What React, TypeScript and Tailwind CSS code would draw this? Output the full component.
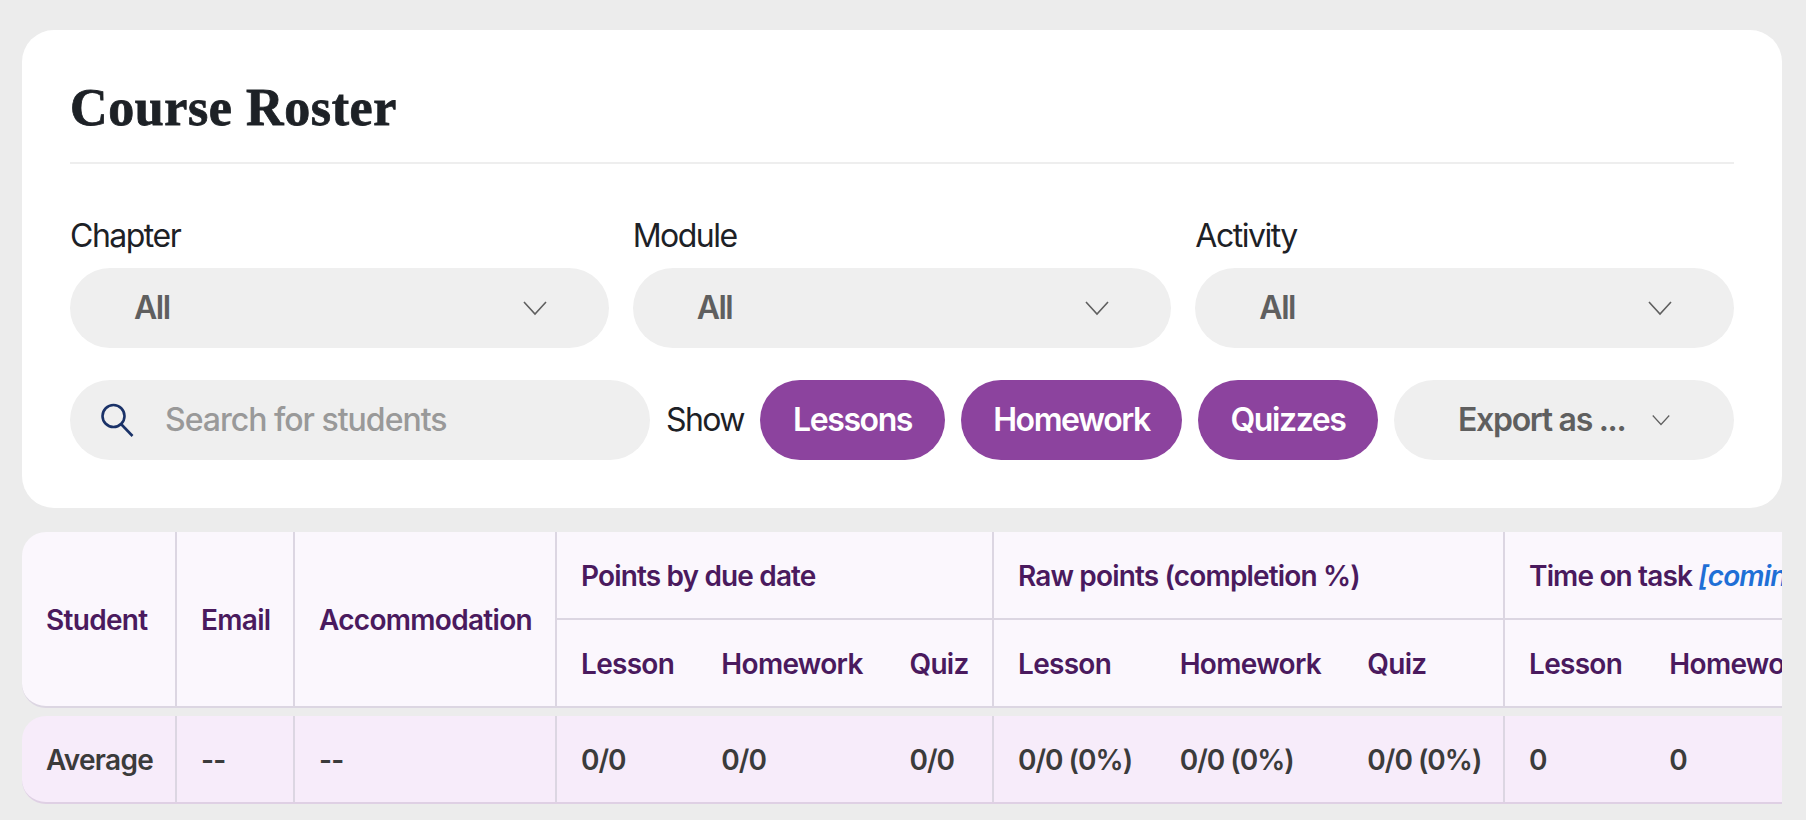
import React from "react";

const Chevron = ({ size = 24 }: { size?: number }) => (
  <svg width={size} height={size} viewBox="0 0 24 24" fill="none" stroke="#5f5f5f" strokeWidth="1.6" className="shrink-0">
    <path d="M1 6l11 12L23 6" />
  </svg>
);

const Select = ({ label }: { label: string }) => (
  <div className="flex flex-col flex-1 min-w-0">
    <div className="text-[32px] leading-[36px] text-[#1d2126] mb-[14px] tracking-[-1.5px]">{label}</div>
    <div className="h-[80px] rounded-[40px] bg-[#efefef] flex items-center justify-between pl-[64px] pr-[62px]">
      <span className="text-[32px] font-semibold text-[#5f5f5f] tracking-[-1.5px]">All</span>
      <Chevron />
    </div>
  </div>
);

const Pill = ({ children, className }: { children: React.ReactNode; className: string }) => (
  <div className={"h-[80px] rounded-[40px] bg-[#8c439e] text-white text-[32px] font-semibold tracking-[-1.4px] flex items-center justify-center " + className}>
    {children}
  </div>
);

const th = "text-[28px] font-semibold text-[#4a1a5e] tracking-[-0.7px] whitespace-nowrap pt-[2px]";
const thTitle = "text-[28px] font-semibold text-[#4a1a5e] tracking-[-0.85px] whitespace-nowrap pt-[2px]";
const td = "text-[28px] font-semibold text-[#3b3b3b] tracking-[-0.7px] whitespace-nowrap pt-[2px]";
const tdVal = "text-[28px] font-semibold text-[#3b3b3b] tracking-[-1px] whitespace-nowrap pt-[2px]";
const line = "border-r-[2px] border-[#dcd6e2]";

const subCols = ["Lesson", "Homework", "Quiz"];

const Group = ({ title, widths, width }: { title: React.ReactNode; widths: string[]; width: string }) => (
  <div className={"shrink-0 flex flex-col " + width + " " + line}>
    <div className={"h-[88px] flex items-center pl-[24px] border-b-[2px] border-[#dcd6e2] " + thTitle}>{title}</div>
    <div className="flex-1 flex items-center">
      {subCols.map((label, i) => (
        <div key={label} className={"pl-[24px] " + widths[i] + " " + th}>{label}</div>
      ))}
    </div>
  </div>
);

const Vals = ({ vals, widths, width }: { vals: string[]; widths: string[]; width: string }) => (
  <div className={"shrink-0 h-full flex items-center " + width + " " + line}>
    {vals.map((v, i) => (
      <div key={i} className={"pl-[24px] " + widths[i] + " " + tdVal}>{v}</div>
    ))}
  </div>
);

const w1 = ["w-[141px]", "w-[189px]", "w-[107px]"];
const w2 = ["w-[162px]", "w-[188px]", "w-[160px]"];
const w3 = ["w-[141px]", "w-[189px]", "w-[107px]"];

export default function App() {
  return (
    <div className="h-screen overflow-hidden bg-[#ececec] pt-[30px] px-[24px]" style={{ fontFamily: "Inter, sans-serif" }}>
      <div className="-ml-[2px] bg-white rounded-[32px] px-[48px] h-[478px] flex flex-col">
        <h1
          className="pt-[52px] h-[134px] border-b-[2px] border-[#eeeeee] text-[52px] leading-[52px] font-bold text-[#1d2126] tracking-[0.6px] [-webkit-text-stroke:0.8px_#1d2126]"
          style={{ fontFamily: '"Liberation Serif", serif' }}
        >
          Course Roster
        </h1>
        <div className="flex gap-[24px] mt-[54px]">
          <Select label="Chapter" />
          <Select label="Module" />
          <Select label="Activity" />
        </div>
        <div className="flex items-center mt-[32px]">
          <div className="w-[580px] h-[80px] rounded-[40px] bg-[#efefef] flex items-center pl-[29px]">
            <svg width="36" height="36" viewBox="0 0 36 36" fill="none" stroke="#1a3268" strokeWidth="2.6" className="shrink-0">
              <circle cx="14.5" cy="14" r="11" />
              <path d="M22 22l11.5 12" />
            </svg>
            <span className="ml-[30px] text-[32px] font-medium text-[#999999] tracking-[-1px]">Search for students</span>
          </div>
          <span className="ml-[16px] w-[78px] shrink-0 whitespace-nowrap text-[32px] text-[#1d2126] tracking-[-1.6px]">Show</span>
          <Pill className="ml-[16px] w-[185px]">Lessons</Pill>
          <Pill className="ml-[16px] w-[221px]">Homework</Pill>
          <Pill className="ml-[16px] w-[180px]">Quizzes</Pill>
          <div className="ml-[16px] flex-1 h-[80px] rounded-[40px] bg-[#efefef] flex items-center justify-between pl-[64px] pr-[64px]">
            <span className="text-[32px] font-semibold text-[#5f5f5f] tracking-[-1.3px] whitespace-nowrap">Export as ...</span>
            <Chevron size={18} />
          </div>
        </div>
      </div>

      <div className="-ml-[2px] mt-[24px] overflow-hidden flex flex-col gap-[8px]">
        <div className="w-[2400px] h-[176px] flex rounded-l-[24px] bg-[#fbf7fd] border-b-[2px] border-[#dcd6e2]">
          <div className={"shrink-0 w-[155px] flex items-center pl-[24px] " + th + " " + line}>Student</div>
          <div className={"shrink-0 w-[118px] flex items-center pl-[24px] " + th + " " + line}>Email</div>
          <div className={"shrink-0 w-[262px] flex items-center pl-[24px] " + th + " " + line}>Accommodation</div>
          <Group title="Points by due date" widths={w1} width="w-[437px]" />
          <Group title="Raw points (completion %)" widths={w2} width="w-[511px]" />
          <Group
            title={<span>Time on task <em className="text-[#1f6fd6] font-semibold">[coming soon]</em></span>}
            widths={w3}
            width="w-[437px]"
          />
        </div>
        <div className="w-[2400px] h-[88px] flex items-center rounded-l-[24px] bg-[#f7ecfa] border-b-[2px] border-[#dfd0e4]">
          <div className={"shrink-0 w-[155px] h-full flex items-center pl-[24px] " + td + " " + line}>Average</div>
          <div className={"shrink-0 w-[118px] h-full flex items-center pl-[24px] " + td + " " + line}>--</div>
          <div className={"shrink-0 w-[262px] h-full flex items-center pl-[24px] " + td + " " + line}>--</div>
          <Vals vals={["0/0", "0/0", "0/0"]} widths={w1} width="w-[437px]" />
          <Vals vals={["0/0 (0%)", "0/0 (0%)", "0/0 (0%)"]} widths={w2} width="w-[511px]" />
          <Vals vals={["0", "0", "0"]} widths={w3} width="w-[437px]" />
        </div>
      </div>
    </div>
  );
}
